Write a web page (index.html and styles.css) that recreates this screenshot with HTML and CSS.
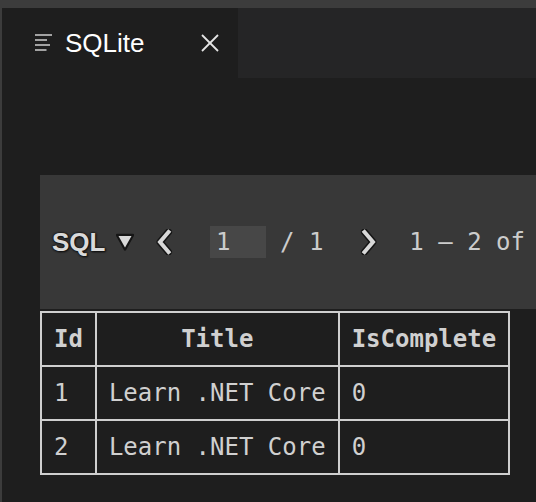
FILE: index.html
```html
<!DOCTYPE html>
<html>
<head>
<meta charset="utf-8">
<link rel="stylesheet" href="styles.css">
</head>
<body>
<div class="window">
  <div class="tabbar">
    <div class="tab">
      <svg class="tab-icon" width="17" height="18" viewBox="0 0 17 18">
        <g stroke="#c5c5c5" stroke-width="1.6" fill="none">
          <line x1="0" y1="1" x2="17" y2="1"/>
          <line x1="0" y1="6" x2="12" y2="6"/>
          <line x1="0" y1="11" x2="15" y2="11"/>
          <line x1="0" y1="16" x2="11.5" y2="16"/>
        </g>
      </svg>
      <span class="tab-title">SQLite</span>
      <svg class="tab-close" width="18" height="18" viewBox="0 0 18 18">
        <g stroke="#e6e6e6" stroke-width="1.8" fill="none">
          <line x1="1" y1="1" x2="17" y2="17"/>
          <line x1="17" y1="1" x2="1" y2="17"/>
        </g>
      </svg>
    </div>
  </div>
  <div class="editor">
    <div class="toolbar">
      <span class="sql">SQL</span>
      <svg class="caret" width="18" height="18" viewBox="0 0 18 18">
        <polygon points="1,2 17,2 9,16.5" fill="#151515" stroke="#151515" stroke-width="2.5" stroke-linejoin="round"/>
        <polygon points="2.5,3 15.5,3 9,14.5" fill="#d8d8d8"/>
      </svg>
      <svg class="chev chev-left" width="18" height="26" viewBox="0 0 18 26">
        <polyline points="13.5,3 5,13 13.5,23" fill="none" stroke="#151515" stroke-width="7" stroke-linecap="round" stroke-linejoin="round"/>
        <polyline points="13.5,3 5,13 13.5,23" fill="none" stroke="#d8d8d8" stroke-width="4" stroke-linecap="square" stroke-linejoin="miter"/>
      </svg>
      <span class="page-input">1</span>
      <span class="mono page-total">/ 1</span>
      <svg class="chev chev-right" width="18" height="26" viewBox="0 0 18 26">
        <polyline points="4.5,3 13,13 4.5,23" fill="none" stroke="#151515" stroke-width="7" stroke-linecap="round" stroke-linejoin="round"/>
        <polyline points="4.5,3 13,13 4.5,23" fill="none" stroke="#d8d8d8" stroke-width="4" stroke-linecap="square" stroke-linejoin="miter"/>
      </svg>
      <span class="mono range">1 – 2 of</span>
    </div>
    <table class="grid">
      <thead>
        <tr><th>Id</th><th>Title</th><th>IsComplete</th></tr>
      </thead>
      <tbody>
        <tr><td>1</td><td>Learn .NET Core</td><td>0</td></tr>
        <tr><td>2</td><td>Learn .NET Core</td><td>0</td></tr>
      </tbody>
    </table>
  </div>
</div>
</body>
</html>
```
FILE: styles.css
```css
html, body {
  margin: 0;
  padding: 0;
  height: 100%;
  overflow: hidden;
  background: #1e1e1e;
}

.window {
  box-sizing: border-box;
  height: 100vh;
  background: #3c3c3c;
  padding: 8px 0 0 2px;
  display: flex;
  flex-direction: column;
  overflow: hidden;
}

.tabbar {
  height: 70px;
  flex: none;
  background: #252526;
  display: flex;
}

.tab {
  width: 236px;
  box-sizing: border-box;
  background: #1e1e1e;
  display: flex;
  align-items: center;
  padding: 0 19px 0 33px;
}

.tab-icon {
  flex: none;
  margin-right: 13px;
}

.tab-title {
  font-family: "Liberation Sans", Arial, sans-serif;
  font-size: 26px;
  color: #ffffff;
  line-height: 30px;
}

.tab-close {
  flex: none;
  margin-left: auto;
}

.editor {
  flex: 1;
  background: #1e1e1e;
  padding: 97px 0 0 38px;
}

.toolbar {
  width: 620px;
  height: 134px;
  background: #383838;
  display: flex;
  align-items: center;
  padding-left: 12px;
  box-sizing: border-box;
  white-space: nowrap;
}

.sql {
  flex: none;
  font-family: "Liberation Sans", Arial, sans-serif;
  font-weight: bold;
  font-size: 26px;
  color: #dadada;
  width: 64px;
  text-shadow: 0 0 2px #111, 0 0 2px #111, 1px 1px 2px #111;
}

.caret {
  flex: none;
}

.chev {
  flex: none;
}

.chev-left {
  margin-left: 21px;
}

.page-input {
  flex: none;
  margin-left: 37px;
  width: 56px;
  height: 32px;
  box-sizing: border-box;
  padding-left: 6px;
  background: #474747;
  font-family: "DejaVu Sans Mono", monospace;
  font-size: 24px;
  line-height: 32px;
  color: #cccccc;
}

.mono {
  font-family: "DejaVu Sans Mono", monospace;
  font-size: 24px;
  line-height: 28px;
  color: #cccccc;
}

.page-total {
  margin-left: 14px;
}

.chev-right {
  margin-left: 37px;
}

.range {
  margin-left: 31px;
}

.grid {
  margin-top: 2px;
  border-collapse: collapse;
  font-family: "DejaVu Sans Mono", monospace;
  font-size: 24px;
  line-height: 28px;
  color: #d0d0d0;
}

.grid th,
.grid td {
  border: 2px solid #cfcfcf;
  padding: 12px;
  white-space: nowrap;
}

.grid th {
  font-weight: bold;
  text-align: center;
}

.grid td {
  text-align: left;
}
```
